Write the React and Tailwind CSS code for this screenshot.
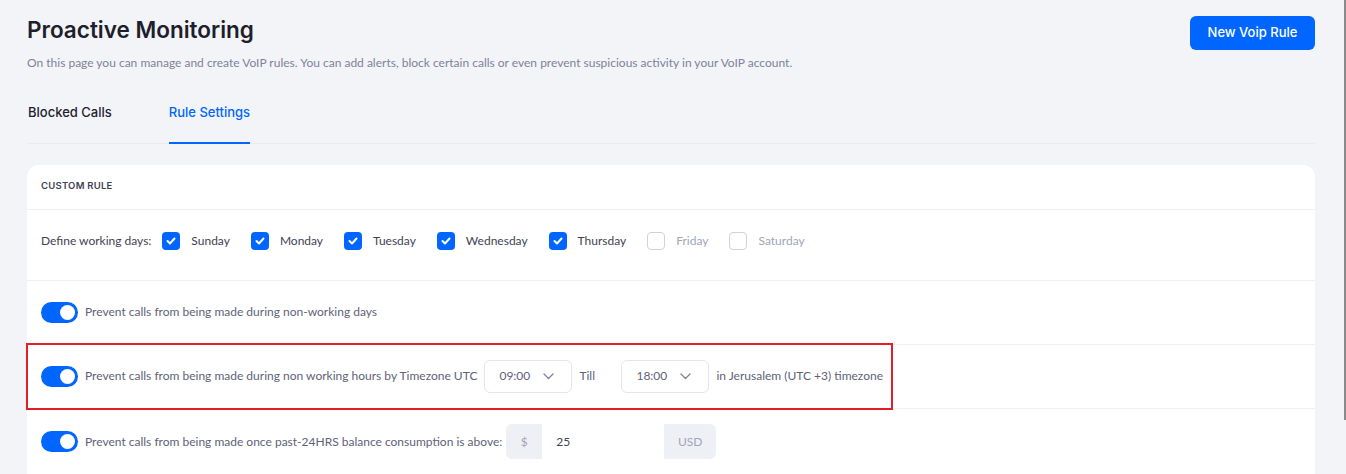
import React from "react";

const days = [
  { name: "Sunday", on: true },
  { name: "Monday", on: true },
  { name: "Tuesday", on: true },
  { name: "Wednesday", on: true },
  { name: "Thursday", on: true },
  { name: "Friday", on: false },
  { name: "Saturday", on: false },
];

const head = { fontFamily: "Inter, 'Noto Sans', sans-serif" };
const body = { fontFamily: "Lato, 'Noto Sans', sans-serif" };

const Check = ({ on }) =>
  on ? (
    <span className="w-[18px] h-[18px] rounded-[4px] bg-[#0066ff] flex items-center justify-center">
      <svg width="10" height="8" viewBox="0 0 10 8" fill="none">
        <path d="M1.5 4l2.5 2.5L8.5 1.5" stroke="white" strokeWidth="2" strokeLinecap="round" strokeLinejoin="round" />
      </svg>
    </span>
  ) : (
    <span className="w-[18px] h-[18px] rounded-[4px] border border-[#cfd2d8] bg-white" />
  );

const Toggle = () => (
  <span className="w-[37px] h-[21px] rounded-full bg-[#0066ff] flex items-center justify-end pr-[3px] shrink-0">
    <span className="w-[15px] h-[15px] rounded-full bg-white" />
  </span>
);

const TimeSelect = ({ value }) => (
  <div className="w-[88px] h-[33px] border border-[#e4e6ef] rounded-md bg-white flex items-center justify-between pl-[14px] pr-[17px] text-[#5e6278]">
    <span>{value}</span>
    <svg width="11" height="7" viewBox="0 0 11 7" fill="none">
      <path d="M1 1l4.5 4.5L10 1" stroke="#7e8299" strokeWidth="1.3" strokeLinecap="round" strokeLinejoin="round" />
    </svg>
  </div>
);

const App = () => {
  return (
    <div className="w-[1346px] h-[474px] overflow-hidden bg-[#f3f4f8] flex">
      <div className="flex-1 pl-[27px] pr-[27px]">
        {/* page header */}
        <div className="flex justify-between items-start pt-[16px]">
          <div>
            <h1 className="text-[22.5px] font-semibold text-[#1e1e2d] leading-[28px]" style={head}>
              Proactive Monitoring
            </h1>
            <p className="mt-[10px] text-[12px] text-[#7e8299]" style={body}>
              On this page you can manage and create VoIP rules. You can add alerts, block certain calls or even prevent suspicious activity in your VoIP account.
            </p>
          </div>
          <button className="h-[34px] w-[125px] rounded-md bg-[#0066ff] text-white text-[13px] font-medium" style={head}>
            New Voip Rule
          </button>
        </div>

        {/* tabs */}
        <div className="mt-[29px] flex border-b border-[#e9ebf0] text-[13px] font-medium" style={head}>
          <div className="pb-[20px] pt-[2px] pl-[1px] text-[#1e1e2d] mr-[57px]">Blocked Calls</div>
          <div className="pb-[18px] pt-[2px] text-[#0066ff] border-b-2 border-[#0066ff] mb-[-1px]">Rule Settings</div>
        </div>

        {/* rule card */}
        <div className="mt-[21px] bg-white rounded-xl" style={body}>
          <div className="h-[45px] px-[14px] flex items-center border-b border-[#eef0f8]">
            <span className="text-[9.5px] font-semibold tracking-wide text-[#3f4254]" style={head}>
              CUSTOM RULE
            </span>
          </div>

          <div className="h-[71px] px-[14px] pb-[7px] flex items-center border-b border-[#eef0f8] text-[12px] text-[#3f4254]">
            <span className="mr-[11px]">Define working days:</span>
            <div className="flex items-center gap-[21px]">
              {days.map((d) => (
                <label key={d.name} className="flex items-center gap-[11px]">
                  <Check on={d.on} />
                  <span className={d.on ? "text-[#3f4254]" : "text-[#a1a5b7]"}>{d.name}</span>
                </label>
              ))}
            </div>
          </div>

          <div className="h-[64px] px-[14px] flex items-center gap-[7px] border-b border-[#eef0f8] text-[12px] text-[#5e6278]">
            <Toggle />
            <span>Prevent calls from being made during non-working days</span>
          </div>

          <div className="relative h-[64px] px-[14px] flex items-center gap-[7px] border-b border-[#eef0f8] text-[12px] text-[#5e6278]">
            <div className="absolute left-[-1px] top-[-2px] w-[867px] h-[67px] border-2 border-[#e31e26] pointer-events-none" />
            <Toggle />
            <span>Prevent calls from being made during non working hours by Timezone UTC</span>
            <TimeSelect value="09:00" />
            <span className="w-[35px]">Till</span>
            <TimeSelect value="18:00" />
            <span>in Jerusalem (UTC +3) timezone</span>
          </div>

          <div className="h-[80px] px-[14px] pb-[14px] flex items-center gap-[7px] text-[12px] text-[#5e6278]">
            <Toggle />
            <span>Prevent calls from being made once past-24HRS balance consumption is above:</span>
            <div className="ml-[-3px] h-[35px] flex rounded-md overflow-hidden bg-[#eef0f5]">
              <span className="w-[36px] flex items-center justify-center text-[#a1a5b7]">$</span>
              <span className="w-[122px] bg-white flex items-center pl-[14px] text-[#3f4254]">25</span>
              <span className="w-[52px] flex items-center justify-center text-[#a1a5b7]">USD</span>
            </div>
          </div>
        </div>
      </div>
      <div className="w-[4px] flex justify-end">
        <div className="w-[2px] h-[420px] bg-[#8a8a8a]" />
      </div>
    </div>
  );
};

export default App;
